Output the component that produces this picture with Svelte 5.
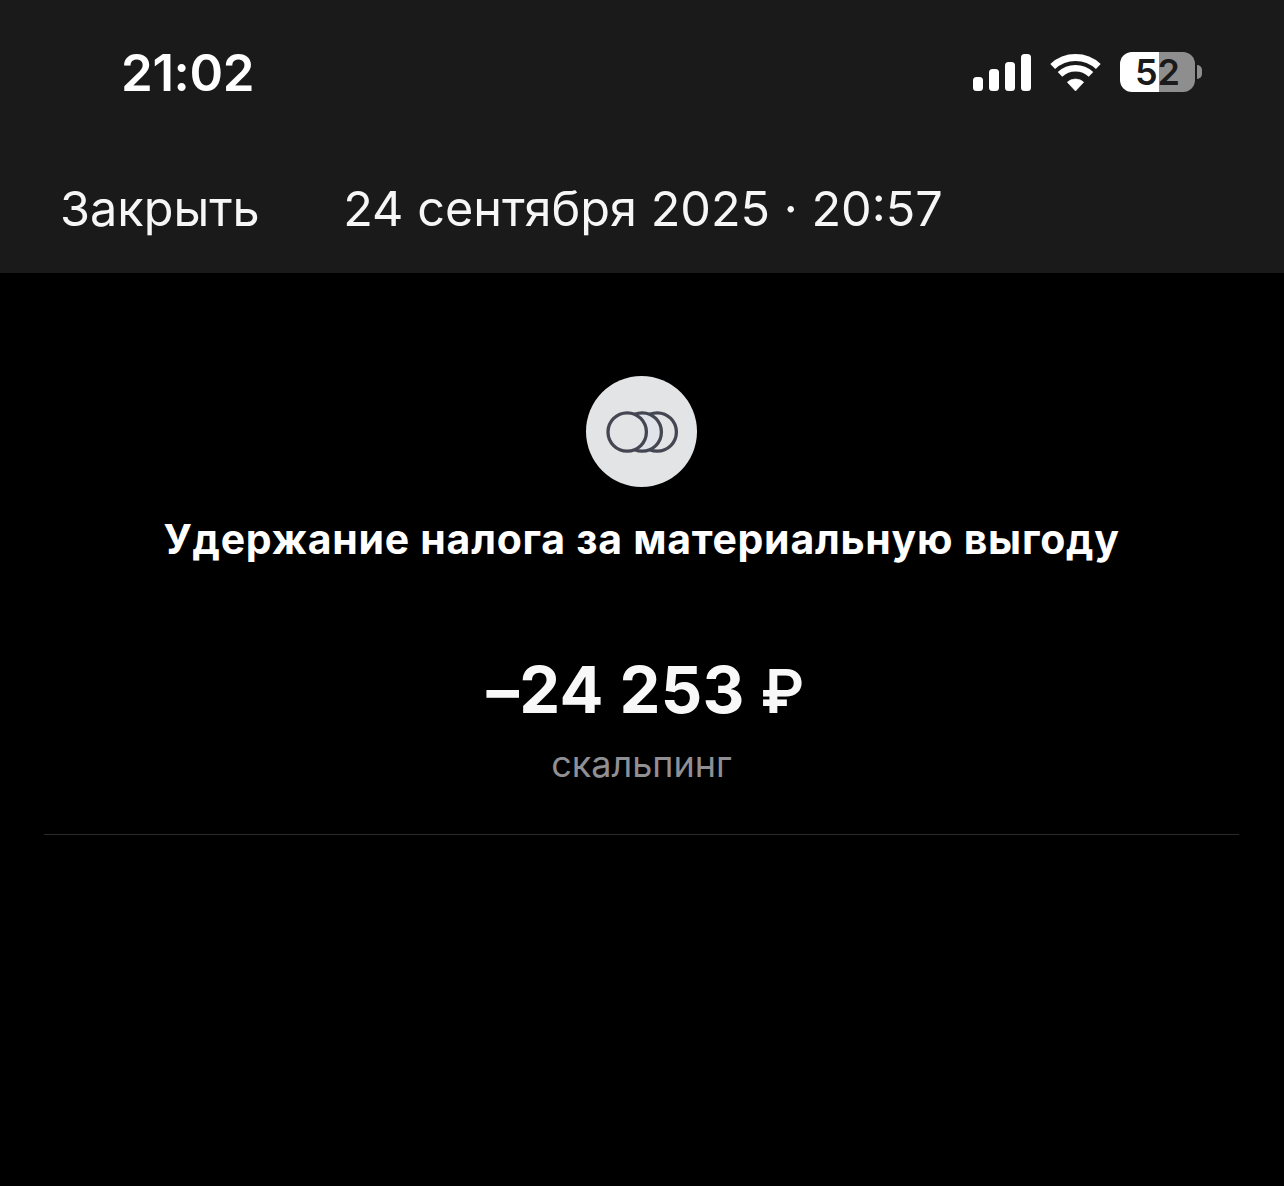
<script>
  const signalBars = [
    { x: 0, h: 14 },
    { x: 16, h: 22 },
    { x: 32, h: 29 },
    { x: 48, h: 37 }
  ];
</script>

<div class="screen">
  <header class="topbar">
    <div class="status">
      <span class="clock">21:02</span>
      <div class="status-icons">
        <svg width="58" height="38" viewBox="0 0 58 38" aria-hidden="true">
          {#each signalBars as bar}
            <rect x={bar.x} y={37 - bar.h} width="10" height={bar.h} rx="3.5" fill="#fff" />
          {/each}
        </svg>
        <svg width="51" height="38" viewBox="0 0 51 38" aria-hidden="true">
          <path d="M25.5 37 L17.3 28.2 A12 12 0 0 1 33.7 28.2 Z" fill="#fff" stroke="#fff" stroke-linejoin="round" stroke-width="0.6" />
          <path d="M10 20.4 A22.7 22.7 0 0 1 41 20.4" fill="none" stroke="#fff" stroke-width="6.6" />
          <path d="M2.7 12.5 A33.5 33.5 0 0 1 48.3 12.5" fill="none" stroke="#fff" stroke-width="7" />
        </svg>
        <div class="battery">
          <div class="battery-body">
            <span>52</span>
          </div>
          <div class="battery-cap"></div>
        </div>
      </div>
    </div>
    <div class="nav">
      <button type="button" class="close">Закрыть</button>
      <span class="date">24 сентября 2025 · 20:57</span>
    </div>
  </header>

  <main class="content">
    <div class="avatar">
      <svg width="74" height="44" viewBox="0 0 74 44" aria-hidden="true">
        <circle cx="52.2" cy="22" r="19.2" fill="none" stroke="#444752" stroke-width="3.3" />
        <circle cx="37.2" cy="22" r="19.2" fill="#e0e3ea" stroke="#444752" stroke-width="3.3" />
        <circle cx="22.2" cy="22" r="19.2" fill="#e2e4e6" stroke="#444752" stroke-width="3.3" />
      </svg>
    </div>
    <h1>Удержание налога за материальную выгоду</h1>
    <div class="amount">–24 253 <span class="currency">₽</span></div>
    <div class="category">скальпинг</div>
    <div class="divider"></div>
  </main>
</div>

<style>
  :global(body) {
    margin: 0;
    background: #000;
  }
  .screen {
    width: 1284px;
    height: 1186px;
    background: #000;
    color: #fff;
    font-family: Inter, "Liberation Sans", sans-serif;
    overflow: hidden;
  }
  .topbar {
    height: 273px;
    background: #1a1a1a;
    box-sizing: border-box;
  }
  .status {
    height: 146px;
    display: flex;
    justify-content: space-between;
    align-items: center;
    padding: 0 82px 0 121px;
  }
  .clock {
    font-size: 51px;
    font-weight: 600;
    letter-spacing: -0.4px;
    margin-bottom: 2px;
  }
  .status-icons {
    display: flex;
    align-items: center;
    gap: 19px;
  }
  .battery {
    display: flex;
    align-items: center;
    gap: 2px;
    margin-bottom: 2px;
  }
  .battery-body {
    width: 75px;
    height: 40px;
    border-radius: 12px;
    background: linear-gradient(90deg, #fff 0, #fff 52%, #8e8e8e 52%, #8e8e8e 100%);
    color: #1a1a1a;
    font-size: 36px;
    font-weight: 600;
    display: flex;
    align-items: center;
    justify-content: center;
  }
  .battery-cap {
    width: 5px;
    height: 14px;
    border-radius: 0 7px 7px 0;
    background: #8e8e8e;
  }
  .nav {
    display: flex;
    align-items: center;
    height: 100px;
    margin-top: 12px;
    padding-left: 60px;
    font-size: 48.6px;
    color: #f6f6f6;
  }
  .close {
    appearance: none;
    border: none;
    background: none;
    padding: 0;
    font: inherit;
    color: inherit;
  }
  .date {
    margin-left: 83.5px;
  }
  .content {
    display: flex;
    flex-direction: column;
    align-items: center;
    padding: 103px 1px 0 0;
  }
  .avatar {
    width: 111px;
    height: 111px;
    border-radius: 50%;
    background: #e2e4e6;
    display: flex;
    align-items: center;
    justify-content: center;
  }
  h1 {
    margin: 27px 0 0;
    font-size: 41px;
    line-height: 50px;
    font-weight: 700;
    letter-spacing: 0.73px;
    text-align: center;
  }
  .amount {
    margin: 88px 0 0 8px;
    font-size: 65px;
    line-height: 76px;
    font-weight: 700;
    letter-spacing: 0.3px;
    color: #f8f8f8;
  }
  .currency {
    font-size: 60px;
    font-weight: 600;
  }
  .category {
    margin-top: 13px;
    font-size: 36px;
    line-height: 44px;
    color: #8f8f94;
  }
  .divider {
    width: 1195px;
    height: 1px;
    margin-top: 48px;
    background: #2a2a2c;
  }
</style>
